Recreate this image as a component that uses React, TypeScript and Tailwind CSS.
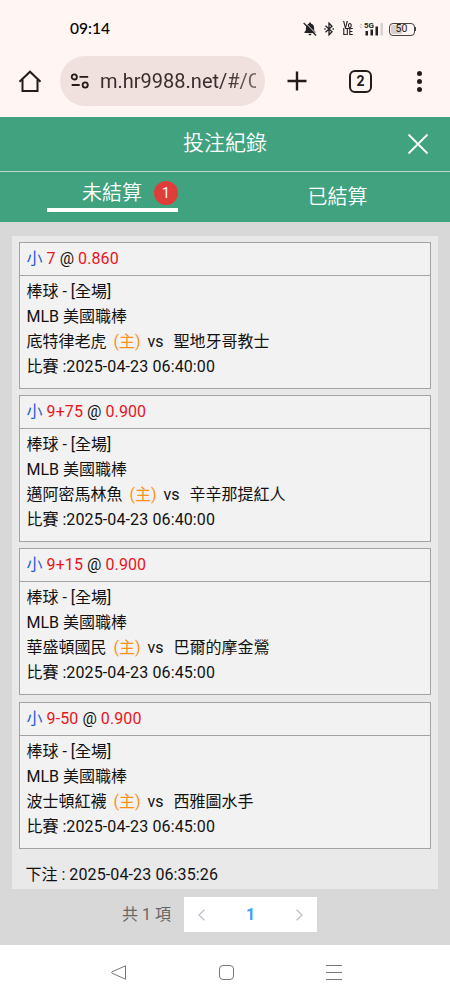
import React from 'react';

type Bet = {
  line: string;
  odds: string;
  home: string;
  away: string;
  time: string;
};

const bets: Bet[] = [
  { line: '7', odds: '0.860', home: '底特律老虎', away: '聖地牙哥教士', time: '2025-04-23 06:40:00' },
  { line: '9+75', odds: '0.900', home: '邁阿密馬林魚', away: '辛辛那提紅人', time: '2025-04-23 06:40:00' },
  { line: '9+15', odds: '0.900', home: '華盛頓國民', away: '巴爾的摩金鶯', time: '2025-04-23 06:45:00' },
  { line: '9-50', odds: '0.900', home: '波士頓紅襪', away: '西雅圖水手', time: '2025-04-23 06:45:00' },
];

const StatusBar = () => (
  <div className="flex h-[58px] items-center justify-between pl-[70px] pr-[34px]">
    <span className="font-['Lato',sans-serif] text-[15.5px] font-medium leading-none text-black">09:14</span>
    <div className="flex items-center">
      {/* Muted bell */}
      <svg width="14" height="14" viewBox="0 0 14 14" className="mr-[6px]">
        <path d="M7 .6c.7 0 1.1.5 1.1 1.1 2 .5 3 2.100 3 4v2.600l1.400 1.800v.9H1.500v-.9l1.400-1.800V5.700c0-1.900 1-3.500 3-4C5.900 1.100 6.300.6 7 .6z" fill="#222" />
        <path d="M5.500 11.800h3c0 .9-.6 1.500-1.500 1.500s-1.500-.6-1.500-1.500z" fill="#222" />
        <path d="M1.600 0L14 12.600" stroke="#fff5f3" strokeWidth="1" />
        <path d="M.700 1L13.100 13.500" stroke="#222" strokeWidth="1.300" />
      </svg>
      {/* Bluetooth */}
      <svg width="12" height="14" viewBox="0 0 12 14" fill="none" stroke="#222" strokeWidth="1.300" className="mr-[8px]">
        <path d="M2.500 3.700l6.500 6L6 12.800V1.200l3 3.100-6.500 6" />
        <path d="M1.300 7h1.400M9.500 7h1.400" />
      </svg>
      {/* VoLTE badge */}
      <div className="mr-[6px] flex h-[14px] w-[10px] flex-col items-center font-['Roboto',sans-serif] text-[7.5px] font-bold leading-[7px] text-[#222]">
        <span className="scale-y-110">Vo</span>
        <span className="scale-y-110 tracking-[-0.9px]">LTE</span>
      </div>
      {/* 5G signal bars */}
      <svg width="25" height="14" viewBox="0 0 25 14" className="mr-[5px]">
        <path d="M.500 3.300l1.500-1.600 1.500 1.600M.500 4.700l1.500 1.600 1.500-1.600" fill="#c2bab8" />
        <text x="5" y="6.300" fontSize="8" fontWeight="700" fill="#222" fontFamily="Roboto, sans-serif">5G</text>
        <rect x="6.500" y="9" width="2.500" height="4.500" fill="#222" />
        <rect x="11.500" y="7.500" width="2.500" height="6" fill="#222" />
        <rect x="16.500" y="4.500" width="2.500" height="9" fill="#222" />
        <rect x="21.500" y="1" width="2.500" height="12.500" fill="#d8d1d0" />
      </svg>
      <div className="flex h-[13px] w-[26px] items-center justify-center rounded-[4px] border border-[#444] bg-[linear-gradient(to_right,#d8d0cf_50%,transparent_50%)] bg-clip-content p-px font-['Roboto',sans-serif] text-[10.5px] leading-none text-[#222]">
        50
      </div>
      <div className="h-[4px] w-[1.500px] bg-[#444]"></div>
    </div>
  </div>
);

const BrowserBar = () => (
  <div className="flex h-[59px] items-start">
    <svg width="24" height="24" viewBox="0 0 24 24" fill="none" stroke="#231a19" strokeWidth="2" className="ml-[18px] mt-[11px]">
      <path d="M4.500 10.500V22h15V10.500" />
      <path d="M1.500 12.700L12 2.700l10.500 10" />
    </svg>
    <div className="ml-[18px] mt-[-2px] flex h-[50px] w-[205px] items-center rounded-full bg-[#f0e1df] pl-[10px] pr-[9px]">
      {/* Site settings */}
      <svg width="20" height="18" viewBox="0 0 20 18" fill="none" stroke="#231a19" strokeWidth="1.800">
        <circle cx="4.300" cy="4.900" r="2.600" />
        <path d="M9.500 4.900h8.700M1.700 13h8" />
        <circle cx="15.200" cy="13" r="2.600" />
      </svg>
      <div className="ml-[10px] flex-1 overflow-hidden whitespace-nowrap font-['Roboto',sans-serif] text-[20px] text-[#3a2e2d] [mask-image:linear-gradient(to_right,black_80%,rgba(0,0,0,0.65)_100%)]">
        <span>m.hr9988.net/#/C</span>
      </div>
    </div>
    <svg width="20" height="20" viewBox="0 0 20 20" stroke="#231a19" strokeWidth="2.400" className="ml-[22px] mt-[13px]">
      <path d="M.5 10h19M10 .5v19" />
    </svg>
    <div className="ml-[42px] mt-[11.500px] flex h-[23px] w-[23px] items-center justify-center rounded-[6px] border-2 border-[#231a19] font-['Roboto',sans-serif] text-[14px] font-bold leading-none text-[#231a19]">
      2
    </div>
    <div className="ml-[45px] mt-[12.500px] flex h-[21px] w-[5px] flex-col items-center justify-between">
      <div className="size-[5px] rounded-full bg-[#231a19]"></div>
      <div className="size-[5px] rounded-full bg-[#231a19]"></div>
      <div className="size-[5px] rounded-full bg-[#231a19]"></div>
    </div>
  </div>
);

const Header = () => (
  <div className="bg-[#41a280] text-white">
    <div className="grid h-[55px] grid-cols-[60px_1fr_60px] items-center border-b border-[#b9dccf]">
      <h1 className="col-start-2 -mt-px text-center text-[21px] font-[350] leading-none">投注紀錄</h1>
      <svg width="22" height="22" viewBox="0 0 22 22" stroke="white" strokeWidth="1.800" className="-mt-px ml-[16.500px]">
        <path d="M1.500 1.500l19 19M20.500 1.500l-19 19" />
      </svg>
    </div>
    <div className="grid h-[50px] grid-cols-2">
      <div className="flex justify-center">
        <div className="flex h-[40px] w-[131px] items-start justify-end border-b-4 border-white">
          <span className="pt-[5px] text-[20px] font-[350] leading-[32px]">未結算</span>
          <span className="ml-[12px] mt-[9px] flex size-[24px] items-center justify-center rounded-full bg-[#df3d3a] text-[14px] leading-none">1</span>
        </div>
      </div>
      <div className="flex items-center justify-center text-[20px] font-[350]">已結算</div>
    </div>
  </div>
);

const BetCard = ({ bet }: { bet: Bet }) => (
  <div className="mb-[6.400px] h-[147px] border border-[#a3a3a3] bg-[#f2f2f2]">
    <div className="flex h-[33px] items-center gap-1 border-b border-[#a3a3a3] px-[6.500px]">
      <span className="text-[#1e5bd6]">小</span>
      <span className="tracking-[0.12px] text-[#ea141c]">{bet.line}</span>
      <span>@</span>
      <span className="tracking-[0.12px] text-[#ea141c]">{bet.odds}</span>
    </div>
    <div className="px-[6.500px] pt-[3px] leading-[25px]">
      <p>棒球 - [全場]</p>
      <p>MLB 美國職棒</p>
      <p className="flex whitespace-pre">
        <span>{bet.home}</span>
        <span className="ml-[7px] mr-[7px] text-[#f99217]">(主)</span>
        <span>vs</span>
        <span className="ml-[10px]">{bet.away}</span>
      </p>
      <p>
        比賽 :<span className="tracking-[0.12px]">{bet.time}</span>
      </p>
    </div>
  </div>
);

const Pagination = () => (
  <div className="flex h-[56px] items-start pl-[122px] pt-[8px]">
    <span className="w-[62px] text-[16px] leading-[36px] text-[#666]">共 1 項</span>
    <div className="flex h-[35px] w-[133px] items-center justify-between bg-white px-[13px]">
      <svg width="10" height="14" viewBox="0 0 10 14" fill="none" stroke="#c0c4cc" strokeWidth="1.400">
        <path d="M7.500 1.700L2 7l5.500 5.300" />
      </svg>
      <span className="text-[16px] font-bold leading-none text-[#409eff]">1</span>
      <svg width="10" height="14" viewBox="0 0 10 14" fill="none" stroke="#c0c4cc" strokeWidth="1.400">
        <path d="M2.500 1.700L8 7l-5.500 5.300" />
      </svg>
    </div>
  </div>
);

const NavBar = () => (
  <div className="flex h-[55px] items-center bg-white pl-[110px]">
    <svg width="17" height="17" viewBox="0 0 17 17" fill="none" stroke="#777" strokeLinejoin="round">
      <path d="M15.500 1.800v13.400L2 9.200q-1-.7 0-1.400z" />
    </svg>
    <div className="ml-[92px] size-[15px] rounded-[4px] border border-[#777]"></div>
    <div className="ml-[92px] flex h-[15px] w-[16px] flex-col justify-between">
      <div className="h-px bg-[#777]"></div>
      <div className="h-px bg-[#777]"></div>
      <div className="h-px bg-[#777]"></div>
    </div>
  </div>
);

const App = () => {
  return (
    <div className="flex h-[1000px] w-[450px] flex-col overflow-hidden bg-[#fff5f3] font-['Roboto','Noto_Sans_CJK_TC',sans-serif]">
      <StatusBar />
      <BrowserBar />
      <Header />
      <main className="flex-1 bg-[#d8d8d8] px-[12px] pt-[14px] text-[16px] text-[#111]">
        <div className="h-[653px] bg-[#e9e9e9] px-[7px] pt-[5.500px]">
          {bets.map((bet, i) => (
            <BetCard key={i} bet={bet} />
          ))}
          <p className="pl-[6.500px] pt-[7px] leading-[25px]">
            下注 : <span className="tracking-[0.12px]">2025-04-23 06:35:26</span>
          </p>
        </div>
        <div className="-mx-[12px]">
          <Pagination />
        </div>
      </main>
      <NavBar />
    </div>
  );
};

export default App;
